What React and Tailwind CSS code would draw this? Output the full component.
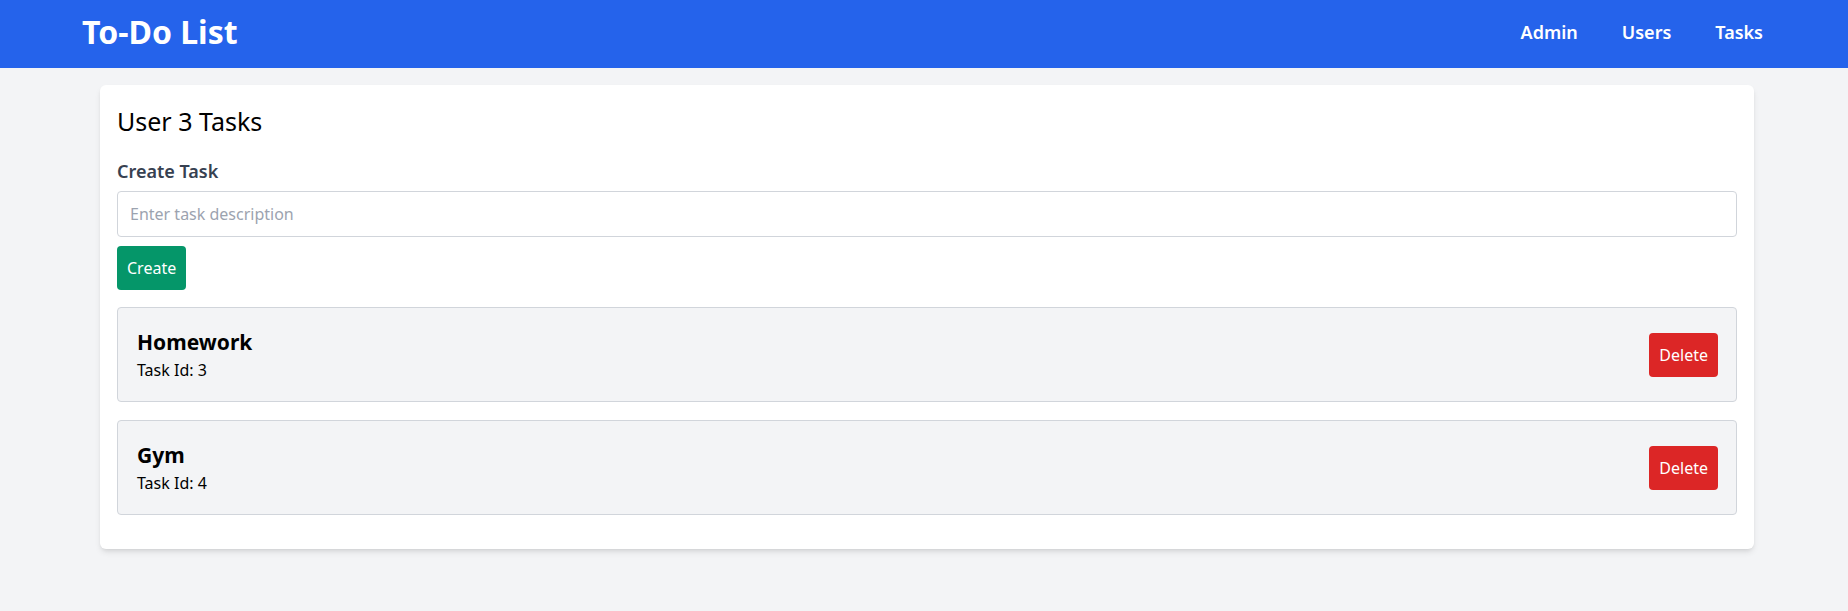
import { useState } from 'react'

const TASKS = [
  { id: 3, description: 'Homework' },
  { id: 4, description: 'Gym' },
]

function Navbar() {
  return (
    <nav className="bg-[#2563eb] text-white">
      <div className="flex h-[68px] items-center justify-between pb-1 pl-[82px] pr-[85px]">
        <span className="text-[32px] font-bold">To-Do List</span>
        <div className="flex items-center gap-[44px] text-lg font-semibold">
          <a href="#admin">Admin</a>
          <a href="#users">Users</a>
          <a href="#tasks">Tasks</a>
        </div>
      </div>
    </nav>
  )
}

function TaskRow({ task, onDelete }) {
  return (
    <div className="flex items-center justify-between rounded border border-[#d1d5db] bg-[#f3f4f6] pb-[19px] pl-[19px] pr-[18px] pt-[20px]">
      <div>
        <h3 className="mb-[2px] text-[21px] leading-7 font-bold text-black">{task.description}</h3>
        <p className="text-base text-black">Task Id: {task.id}</p>
      </div>
      <button
        type="button"
        onClick={() => onDelete(task.id)}
        className="rounded bg-[#dc2626] px-2.5 py-2.5 text-base text-white"
      >
        Delete
      </button>
    </div>
  )
}

export default function App() {
  const [tasks, setTasks] = useState(TASKS)
  const [text, setText] = useState('')

  const create = () => {
    if (!text.trim()) return
    const id = tasks.length ? Math.max(...tasks.map((t) => t.id)) + 1 : 1
    setTasks([...tasks, { id, description: text.trim() }])
    setText('')
  }

  return (
    <div className="min-h-[611px] bg-[#f3f4f6] font-['Noto_Sans',sans-serif]">
      <Navbar />
      <main className="ml-[100px] mt-[17px] w-[1654px] rounded-md bg-white px-[17px] pb-[34px] pt-5 shadow-md">
        <h2 className="mb-5 text-[25px] leading-8 text-black">User 3 Tasks</h2>
        <label htmlFor="task" className="mb-1.5 block text-lg font-semibold text-[#374151]">
          Create Task
        </label>
        <input
          id="task"
          value={text}
          onChange={(e) => setText(e.target.value)}
          placeholder="Enter task description"
          className="block w-full rounded border border-[#d1d5db] px-3 py-[10px] text-base placeholder:text-[#9ca3af] focus:outline-none"
        />
        <button
          type="button"
          onClick={create}
          className="mt-[9px] rounded bg-[#059669] px-2.5 py-2.5 text-base text-white"
        >
          Create
        </button>
        <div className="mt-[17px] flex flex-col gap-[18px]">
          {tasks.map((t) => (
            <TaskRow key={t.id} task={t} onDelete={(id) => setTasks(tasks.filter((x) => x.id !== id))} />
          ))}
        </div>
      </main>
    </div>
  )
}
